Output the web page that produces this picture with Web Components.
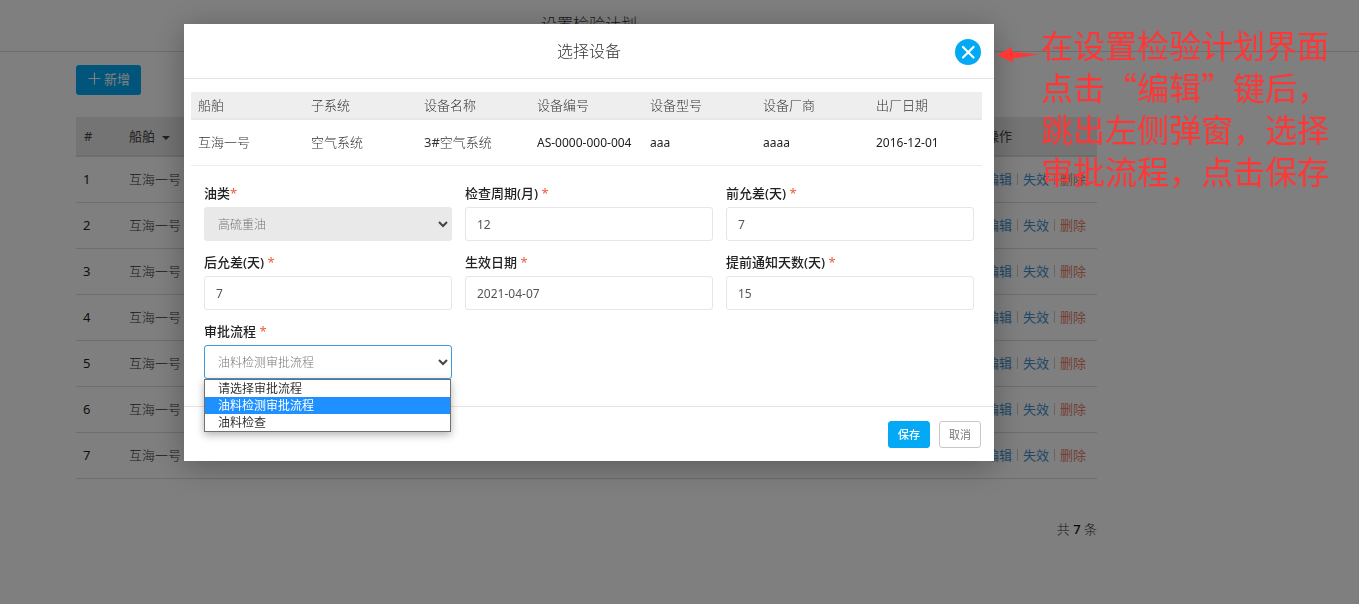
<!DOCTYPE html>
<html lang="zh-CN">
<head>
<meta charset="utf-8">
<title>设置检验计划</title>
<style>
  html, body { margin: 0; }
  body {
    min-height: 100vh;
    background: #fff;
    color: #333;
    font: 13px/20px "Noto Sans", "Noto Sans CJK SC", sans-serif;
    --accent: #03a9f4;
    --line: #e4e4e4;
    --side: 181px;
  }
</style>
</head>
<body>
<plan-page heading="设置检验计划"></plan-page>
<modal-dialog heading="选择设备">
  <device-table></device-table>
  <field-grid>
    <select-field label="油类" tight locked options="高硫重油"></select-field>
    <text-field label="检查周期(月)" value="12"></text-field>
    <text-field label="前允差(天)" value="7"></text-field>
    <text-field label="后允差(天)" value="7"></text-field>
    <text-field label="生效日期" value="2021-04-07"></text-field>
    <text-field label="提前通知天数(天)" value="15"></text-field>
    <select-field label="审批流程" open options="请选择审批流程,油料检测审批流程,油料检查" selected="1"></select-field>
  </field-grid>
  <action-button slot="footer" kind="primary">保存</action-button>
  <action-button slot="footer">取消</action-button>
</modal-dialog>
<side-note>在设置检验计划界面点击“编辑”键后，跳出左侧弹窗，选择审批流程，点击保存</side-note>

<script>
const define = (name, render) => customElements.define(name, class extends HTMLElement {
  connectedCallback() {
    if (this.shadowRoot) return;
    this.attachShadow({ mode: "open" }).innerHTML = render(this);
  }
});

define("plan-page", el => `
  <style>
    :host { display: block; }
    header { box-sizing: border-box; height: 52px; padding-right: var(--side); border-bottom: 1px solid #dcdcdc; }
    h1 { margin: 0; padding-top: 11px; font-size: 16px; line-height: 26px; font-weight: 300; text-align: center; }
    main { margin-right: var(--side); padding: 13px 81px 0 76px; }
  </style>
  <header><h1>${el.getAttribute("heading")}</h1></header>
  <main><add-button></add-button><plan-table></plan-table><record-count total="7"></record-count></main>`);

define("add-button", () => `
  <style>
    :host { display: flex; margin-bottom: 22px; }
    button { display: flex; align-items: center; gap: 3px; height: 30px; padding: 0 11px 3px 12px; border: 0;
      border-radius: 3px; background: var(--accent); color: #fff; font: inherit; }
    svg { width: 13px; height: 13px; }
  </style>
  <button type="button"><svg viewBox="0 0 13 13" aria-hidden="true"><path d="M6.5 .5v12M.5 6.500h12" stroke="#fff" stroke-width="1.200"/></svg>新增</button>`);

define("plan-table", () => `
  <style>
    :host { display: block; }
    table { width: 100%; border-collapse: separate; border-spacing: 0; table-layout: fixed; }
    th, td { box-sizing: border-box; height: 46px; padding: 0 8px 2px; text-align: left; border-bottom: 1px solid #dcdcdc; font-weight: 400; }
    td { font-weight: 300; }
    td:first-child { padding-left: 7px; font-weight: 400; color: #222; }
    th { height: 40px; padding-bottom: 0; background: #e8e8e8; border-bottom: 2px solid #dadada; color: #444; }
    .no { width: 45px; } .ops { width: 119px; }
    .caret { display: inline-block; margin-left: 4px; border: 4px solid transparent; border-top-color: #444; border-bottom: 0; vertical-align: middle; }
    .links { display: flex; align-items: center; gap: 5px; }
    i { width: 1px; height: 12px; background: #ccc; }
    a { color: #4292cf; text-decoration: none; font-weight: 400; } a.del { color: #ea8069; }
  </style>
  <table>
    <thead><tr><th class="no">#</th><th>船舶 <span class="caret"></span></th><th class="ops">操作</th></tr></thead>
    <tbody>${[1, 2, 3, 4, 5, 6, 7].map(n => `<tr><td>${n}</td><td>互海一号</td><td><div class="links">
      <a href="#edit">编辑</a><i></i><a href="#disable">失效</a><i></i><a class="del" href="#delete">删除</a></div></td></tr>`).join("")}</tbody>
  </table>`);

define("record-count", el => `
  <style>
    :host { display: block; margin-top: 40px; text-align: right; font-weight: 300; }
    b { font-weight: 500; color: #111; }
  </style>共 <b>${el.getAttribute("total")}</b> 条`);

define("modal-dialog", el => `
  <style>
    :host { position: fixed; inset: 0; display: flex; justify-content: center; align-items: flex-start;
      padding: 24px var(--side) 0 0; background: rgba(0, 0, 0, .5); }
    section { width: 810px; max-width: 100%; background: #fff; box-shadow: 0 5px 30px rgba(0, 0, 0, .3); }
    header { display: grid; grid-template-columns: 26px 1fr 26px; align-items: center; height: 54px; padding: 0 13px; border-bottom: 1px solid var(--line); }
    h2 { grid-column: 2; margin: 0; font-size: 16px; line-height: 24px; font-weight: 300; text-align: center; }
    header button { width: 26px; height: 26px; margin-top: 2px; padding: 0; border: 0; border-radius: 50%; background: var(--accent); }
    svg { display: block; width: 26px; height: 26px; }
    .body { padding: 13px 12px 27px 7px; }
    footer { display: flex; justify-content: flex-end; gap: 9px; padding: 14px 13px 13px; border-top: 1px solid var(--line); }
  </style>
  <section role="dialog" aria-modal="true" aria-labelledby="t">
    <header><h2 id="t">${el.getAttribute("heading")}</h2>
      <button type="button" aria-label="关闭"><svg viewBox="0 0 26 26"><path d="M8 8l10.500 10.500M18.500 8L8 18.500" stroke="#fff" stroke-width="2.200" stroke-linecap="round"/></svg></button></header>
    <div class="body"><slot></slot></div>
    <footer><slot name="footer"></slot></footer>
  </section>`);

define("device-table", () => `
  <style>
    :host { display: block; }
    table { width: 100%; border-collapse: separate; border-spacing: 0; table-layout: fixed; }
    th, td { box-sizing: border-box; padding: 0 0 2px 7px; text-align: left; white-space: nowrap; }
    th { height: 28px; padding-bottom: 1px; background: #eee; border-bottom: 2px solid #e4e8eb; color: #333; font-weight: 300; }
    td { height: 46px; border-bottom: 1px solid #ececec; font-weight: 300; color: #333; }
    td.latin { padding-bottom: 0; font-weight: 400; font-size: 12px; color: #222; }
    td span { font-weight: 400; }
  </style>
  <table>
    <thead><tr>${["船舶", "子系统", "设备名称", "设备编号", "设备型号", "设备厂商", "出厂日期"].map(t => `<th>${t}</th>`).join("")}</tr></thead>
    <tbody><tr><td>互海一号</td><td>空气系统</td><td><span>3#</span>空气系统</td>
      <td class="latin">AS-0000-000-004</td><td class="latin">aaa</td><td class="latin">aaaa</td><td class="latin">2016-12-01</td></tr></tbody>
  </table>`);

define("field-grid", () => `
  <style>
    :host { display: grid; grid-template-columns: repeat(3, 1fr); gap: 12px 13px; padding: 18px 8px 0 13px; }
  </style><slot></slot>`);

const fieldCss = `
    :host { display: grid; grid-template-rows: 18px 34px; gap: 5px; position: relative; }
    label { color: #222; font-weight: 500; line-height: 18px; }
    label span { color: #f05a3c; font-weight: 400; }
    input, select { box-sizing: border-box; width: 100%; height: 34px; margin: 0; padding: 0 11px; border: 1px solid #e6e6e6;
      border-radius: 3px; background: #fff; color: #555; font: inherit; font-size: 12px; outline: 0; }`;
const labelFor = el => `<label for="f">${el.getAttribute("label")}${el.hasAttribute("tight") ? "" : " "}<span>*</span></label>`;

define("text-field", el => `
  <style>${fieldCss}</style>
  ${labelFor(el)}<input id="f" type="text" value="${el.getAttribute("value")}">`);

define("select-field", el => {
  const options = el.getAttribute("options").split(",");
  const chosen = Number(el.getAttribute("selected") || 0);
  const open = el.hasAttribute("open");
  return `
  <style>${fieldCss}
    select { appearance: none; padding: 2px 28px 0 13px; color: #777; font-weight: 300; opacity: 1; }
    select:disabled { background: #e9e9e9; border-color: #e9e9e9; }
    :host([open]) select { border-color: #3c9be0; }
    svg { position: absolute; right: 3px; bottom: 12px; width: 12px; height: 10px; pointer-events: none; }
    ul { position: absolute; z-index: 1; top: 100%; left: 0; right: 1px; margin: 0; padding: 0; list-style: none; border: 1px solid #707070;
      background: #fff; box-shadow: 0 3px 8px rgba(0, 0, 0, .3); font-size: 12px; line-height: 17px; }
    li { padding: 0 13px; }
    li[aria-selected="true"] { background: #1e90ff; color: #fff; }
  </style>
  ${labelFor(el)}
  <select id="f" ${el.hasAttribute("locked") ? "disabled" : ""}>${options.map((o, i) => `<option ${i === chosen ? "selected" : ""}>${o}</option>`).join("")}</select>
  <svg viewBox="0 0 12 10" aria-hidden="true"><path d="M2 3l4 4 4-4" fill="none" stroke="#444" stroke-width="2"/></svg>
  ${open ? `<ul role="listbox">${options.map((o, i) => `<li role="option" aria-selected="${i === chosen}">${o}</li>`).join("")}</ul>` : ""}`;
});

define("action-button", el => `
  <style>
    :host { display: block; }
    button { box-sizing: border-box; height: 27px; padding: 0 9px; border: 1px solid #c8c8c8; border-radius: 3px; background: #fff; color: #777;
      font: inherit; font-size: 11px; line-height: 16px; }
    :host([kind="primary"]) button { border-color: var(--accent); background: var(--accent); color: #fff; font-weight: 500; }
  </style>
  <button type="button"><slot></slot></button>`);

define("side-note", () => `
  <style>
    :host { position: fixed; z-index: 2; top: 23px; right: 28px; display: flex; align-items: flex-start; gap: 2px; color: #ff3636; }
    svg { width: 42px; height: 16px; margin-top: 24px; }
    p { margin: 0; width: 290px; font: 32px/42px "Noto Sans CJK SC", sans-serif; }
  </style>
  <svg viewBox="0 0 42 16" aria-hidden="true"><path d="M0 8L15 0v5l27 2.500-26 4v4z" fill="currentColor"/></svg>
  <p><slot></slot></p>`);
</script>
</body>
</html>
